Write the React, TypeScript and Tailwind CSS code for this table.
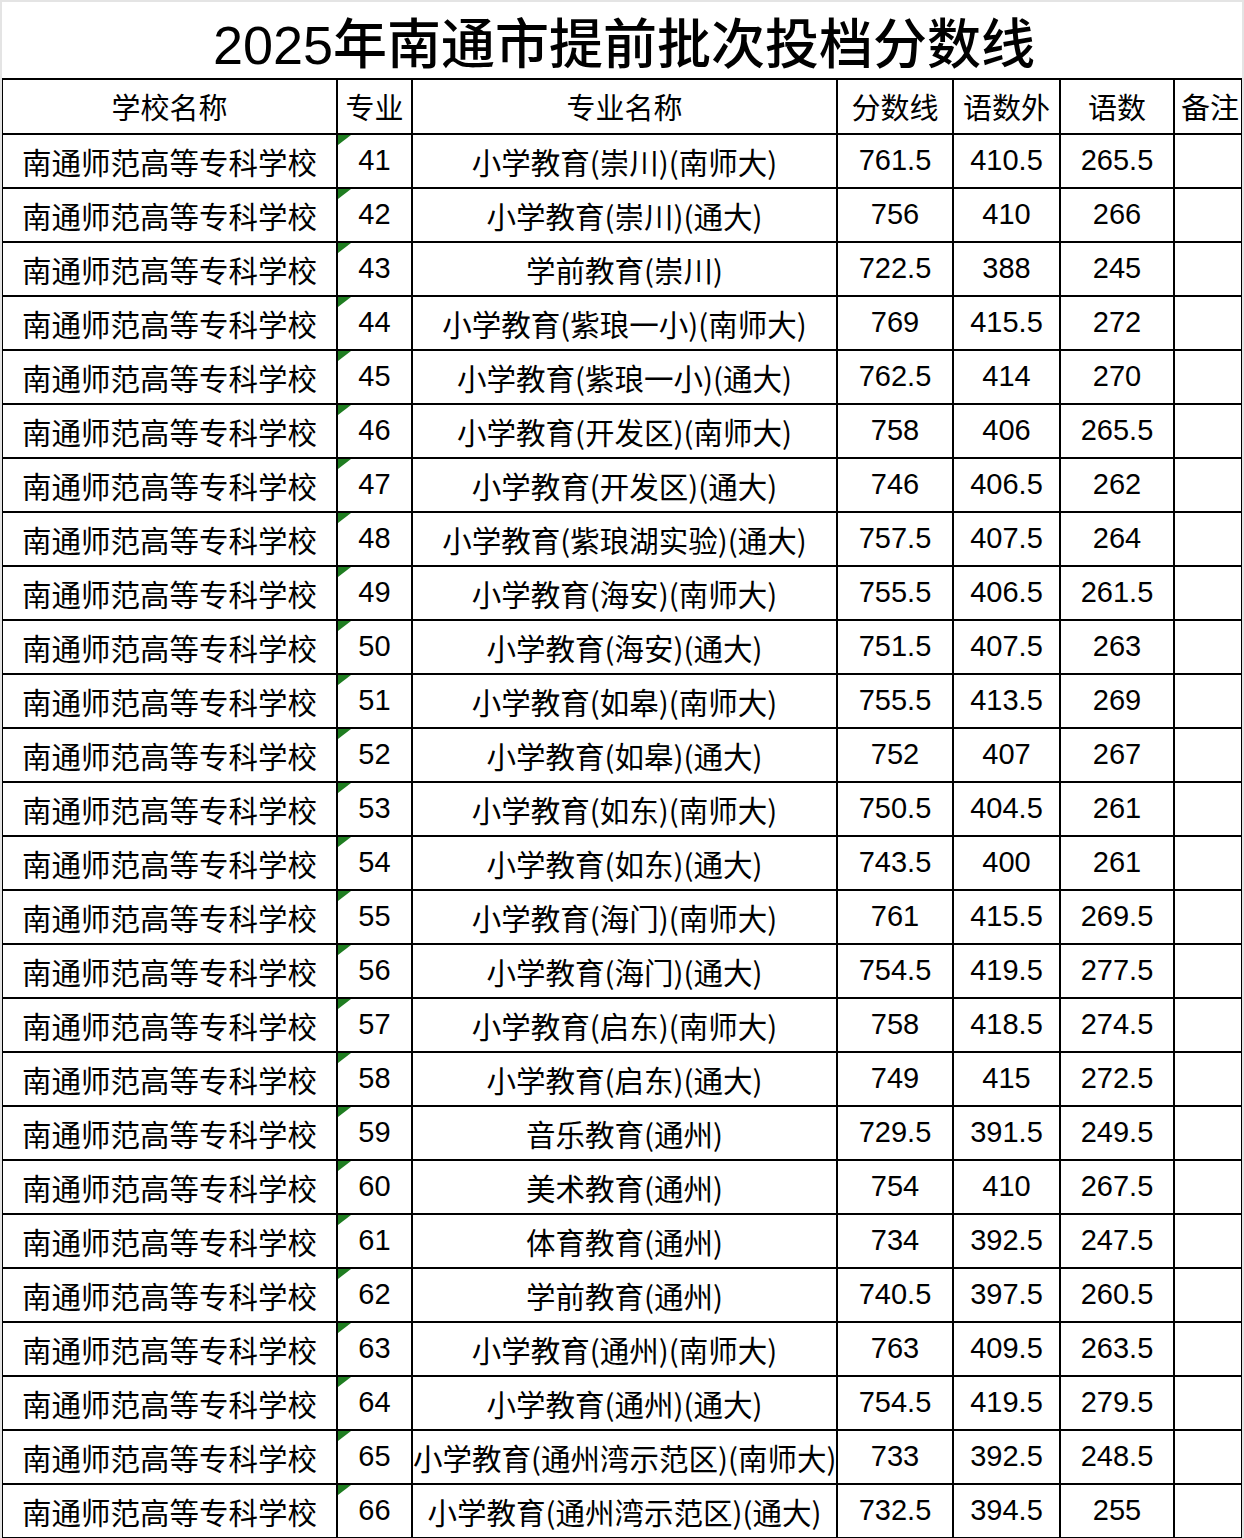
const rows: [string, string, string, string, string][] = [
  ["41", "小学教育(崇川)(南师大)", "761.5", "410.5", "265.5"],
  ["42", "小学教育(崇川)(通大)", "756", "410", "266"],
  ["43", "学前教育(崇川)", "722.5", "388", "245"],
  ["44", "小学教育(紫琅一小)(南师大)", "769", "415.5", "272"],
  ["45", "小学教育(紫琅一小)(通大)", "762.5", "414", "270"],
  ["46", "小学教育(开发区)(南师大)", "758", "406", "265.5"],
  ["47", "小学教育(开发区)(通大)", "746", "406.5", "262"],
  ["48", "小学教育(紫琅湖实验)(通大)", "757.5", "407.5", "264"],
  ["49", "小学教育(海安)(南师大)", "755.5", "406.5", "261.5"],
  ["50", "小学教育(海安)(通大)", "751.5", "407.5", "263"],
  ["51", "小学教育(如皋)(南师大)", "755.5", "413.5", "269"],
  ["52", "小学教育(如皋)(通大)", "752", "407", "267"],
  ["53", "小学教育(如东)(南师大)", "750.5", "404.5", "261"],
  ["54", "小学教育(如东)(通大)", "743.5", "400", "261"],
  ["55", "小学教育(海门)(南师大)", "761", "415.5", "269.5"],
  ["56", "小学教育(海门)(通大)", "754.5", "419.5", "277.5"],
  ["57", "小学教育(启东)(南师大)", "758", "418.5", "274.5"],
  ["58", "小学教育(启东)(通大)", "749", "415", "272.5"],
  ["59", "音乐教育(通州)", "729.5", "391.5", "249.5"],
  ["60", "美术教育(通州)", "754", "410", "267.5"],
  ["61", "体育教育(通州)", "734", "392.5", "247.5"],
  ["62", "学前教育(通州)", "740.5", "397.5", "260.5"],
  ["63", "小学教育(通州)(南师大)", "763", "409.5", "263.5"],
  ["64", "小学教育(通州)(通大)", "754.5", "419.5", "279.5"],
  ["65", "小学教育(通州湾示范区)(南师大)", "733", "392.5", "248.5"],
  ["66", "小学教育(通州湾示范区)(通大)", "732.5", "394.5", "255"],
];

const cjk = "font-['Noto_Sans_CJK_SC',sans-serif]";
const num = "font-['Liberation_Sans','Noto_Sans_CJK_SC',sans-serif]";

export default function App() {
  return (
    <div className="w-[1244px] h-[1538px] bg-white border-t-2 border-x-2 border-[#e4e4e4] overflow-hidden text-black">
      {/* title */}
      <div className="h-[76px] flex items-center justify-center pt-[6px] pl-[4px]">
        <h1 className={`text-[54px] leading-[1.2] font-medium ${num}`}>
          2025<span className={cjk}>年南通市提前批次投档分数线</span>
        </h1>
      </div>

      <table className="border-collapse table-fixed w-[1240px] -ml-[1px]">
        <colgroup>
          <col className="w-[335px]" />
          <col className="w-[75px]" />
          <col className="w-[425px]" />
          <col className="w-[116px]" />
          <col className="w-[107px]" />
          <col className="w-[114px]" />
          <col className="w-[68px]" />
        </colgroup>
        <thead>
          <tr className={`h-[55px] text-[29px] ${cjk}`}>
            <th className="border-2 border-black font-normal">学校名称</th>
            <th className="border-2 border-black font-normal whitespace-nowrap">专业</th>
            <th className="border-2 border-black font-normal">专业名称</th>
            <th className="border-2 border-black font-normal whitespace-nowrap">分数线</th>
            <th className="border-2 border-black font-normal whitespace-nowrap">语数外</th>
            <th className="border-2 border-black font-normal">语数</th>
            <th className="border-2 border-black font-normal whitespace-nowrap text-left pl-[6px]">备注</th>
          </tr>
        </thead>
        <tbody>
          {rows.map((r) => (
            <tr key={r[0]} className="h-[54px]">
              <td className={`border-2 border-black text-center text-[29.5px] leading-[1.3] whitespace-nowrap ${cjk}`}>
                南通师范高等专科学校
              </td>
              <td className={`relative border-2 border-black text-center text-[29px] ${num}`}>
                <span className="absolute left-0 top-0 w-0 h-0 border-t-[10px] border-r-[13px] border-t-[#1f7d21] border-r-transparent" />
                {r[0]}
              </td>
              <td className={`border-2 border-black p-0 text-center whitespace-nowrap text-[29.5px] leading-[1.3] ${cjk}`}>
                {r[1]}
              </td>
              <td className={`border-2 border-black text-center text-[29px] ${num}`}>{r[2]}</td>
              <td className={`border-2 border-black text-center text-[29px] ${num}`}>{r[3]}</td>
              <td className={`border-2 border-black text-center text-[29px] ${num}`}>{r[4]}</td>
              <td className="border-2 border-black"></td>
            </tr>
          ))}
        </tbody>
      </table>
    </div>
  );
}
